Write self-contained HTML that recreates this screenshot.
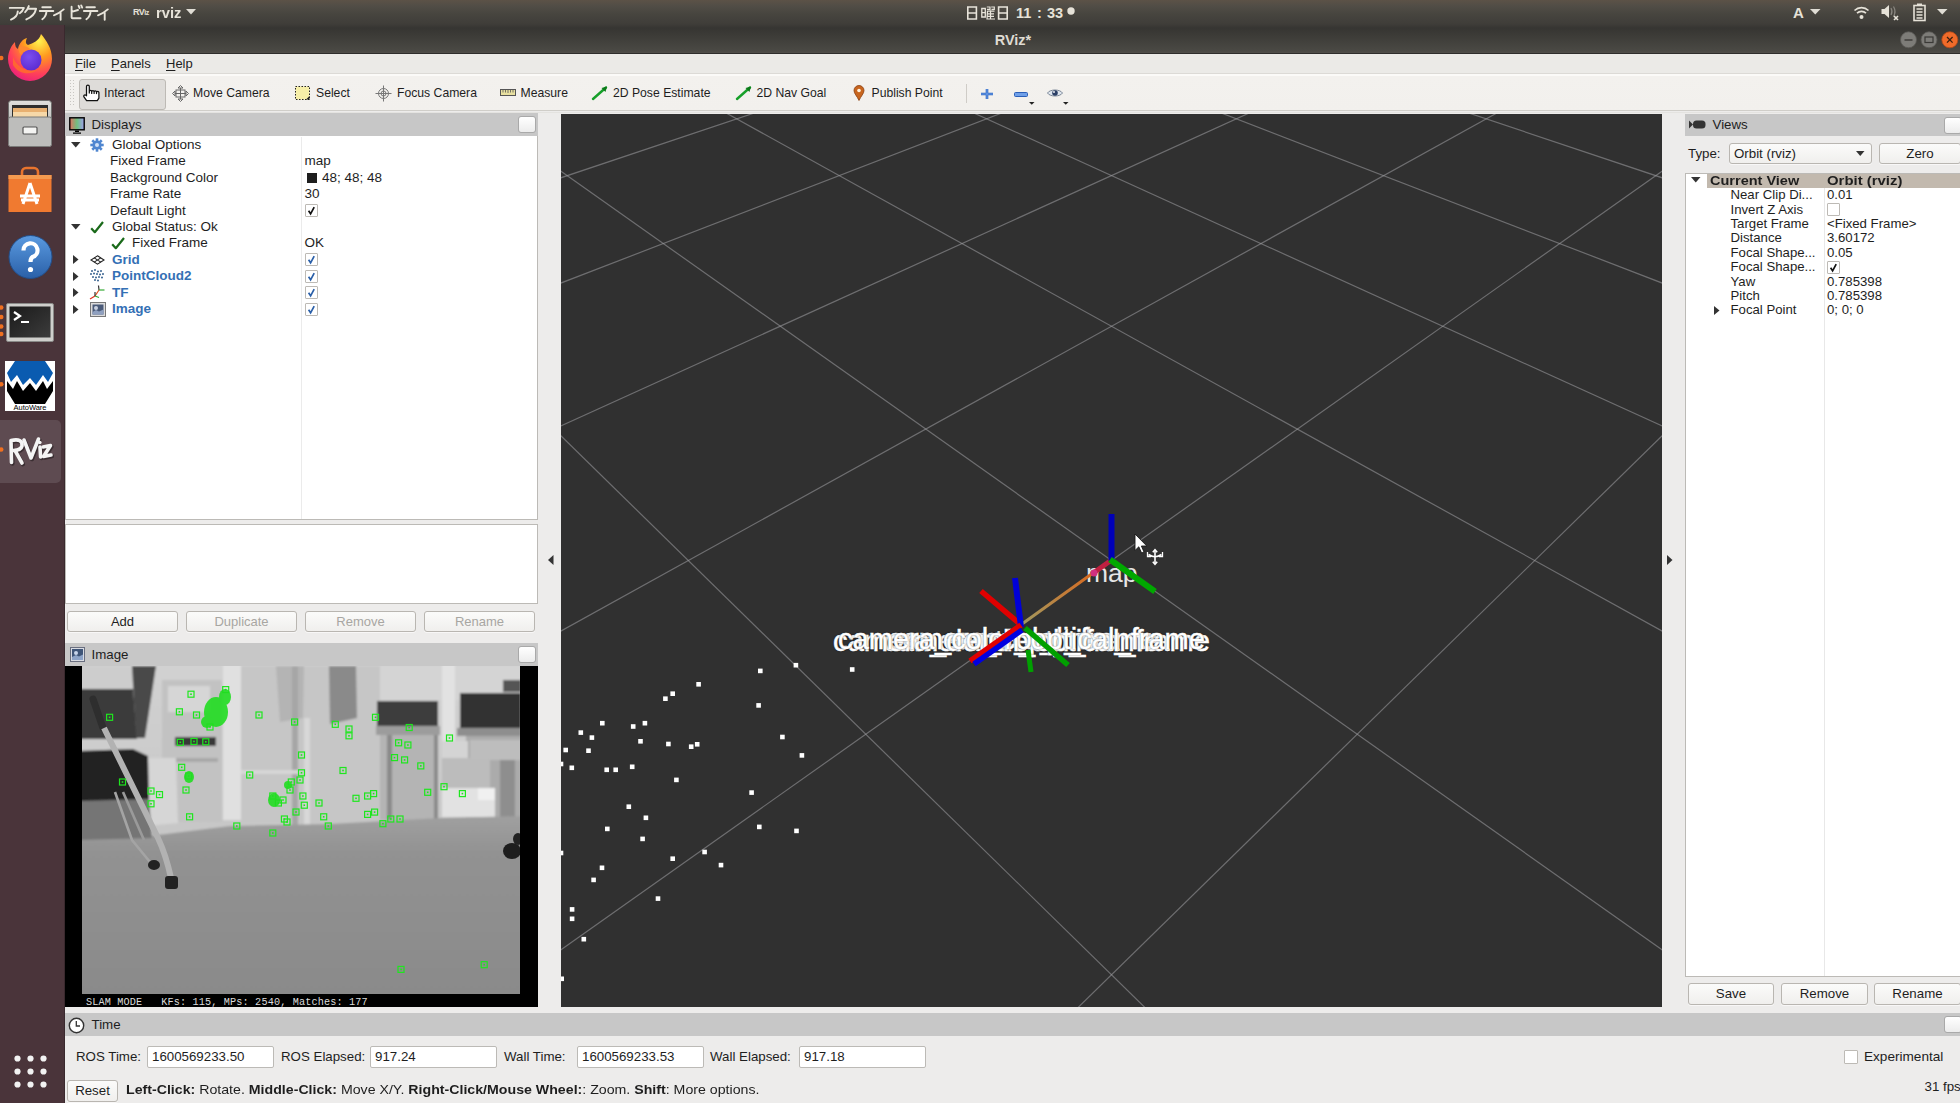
<!DOCTYPE html>
<html><head><meta charset="utf-8">
<style>
*{box-sizing:border-box}
body{margin:0;width:1960px;height:1103px;overflow:hidden;position:relative;background:#edeceb;font-family:"Liberation Sans",sans-serif;color:#1e1e1e}
.a{position:absolute}
.t{position:absolute;white-space:pre}
.btn{border:1px solid #b9b6b1;border-radius:3px;background:linear-gradient(#fbfbfa,#f0efed);text-align:center;white-space:nowrap;box-shadow:0 1px 0 rgba(255,255,255,.6)}
.hdr{background:#c7c7c7}
.fb{border:1px solid #a9a9a9;border-radius:3px;background:linear-gradient(#ffffff,#ececec)}
.cb{position:absolute;width:13px;height:13px;border:1px solid #bdbab5;background:#fff;border-radius:1px}
svg{position:absolute;overflow:visible}
</style></head><body>

<div class="a" style="left:0px;top:0px;width:1960px;height:54px;background:linear-gradient(#5c5247 0px,#514d46 6px,#47453f 14px,#3f3d39 24px,#363532 28px,#3c3b37 35px,#4a4944 51px,#4f4d48 52.5px,#2e2d2b 53.5px)"></div>
<div class="a" style="left:0px;top:25px;width:65px;height:1078px;background:#4a343a;border-right:1px solid #3a292e"></div>
<div class="a" style="left:65px;top:54px;width:1895px;height:20px;background:#ebeae7;border-bottom:1px solid #dcdad6"></div>
<div class="a" style="left:65px;top:74px;width:1895px;height:37px;background:linear-gradient(#fbfaf8 0px,#fbfaf8 1.5px,#f3f1ee 2.5px,#f2f0ed 100%);border-bottom:1px solid #d0cec9"></div>
<div class="a" style="left:65px;top:112px;width:1895px;height:1px;background:#e4e3e0"></div>
<div class="a" style="left:65px;top:113px;width:473px;height:24px;background:#c7c7c7"></div>
<svg style="left:69px;top:117px" width="16" height="17" viewBox="0 0 16 17">
<defs><linearGradient id="mon" x1="0" x2="1"><stop offset="0" stop-color="#e07060"/><stop offset="0.5" stop-color="#70c080"/><stop offset="1" stop-color="#a0a0f0"/></linearGradient></defs>
<rect x="0.8" y="0.8" width="14.4" height="12" fill="url(#mon)" stroke="#000" stroke-width="1.4"/>
<path d="M6 13.5h4v1.5h-4z M4 15.5h8v1.2h-8z" fill="#000"/></svg>
<div class="t" style="left:91.5px;top:114.50px;font-size:13.3px;line-height:20px;color:#1e1e1e;font-weight:normal;">Displays</div>
<div class="a fb" style="left:518px;top:116px;width:18px;height:17px"></div>
<div class="a" style="left:65px;top:136px;width:473px;height:384px;background:#fff;border:1px solid #bcbab6;border-top:none"></div>
<div class="a" style="left:301px;top:137px;width:1px;height:382px;background:#ebebeb"></div>
<svg style="left:70.5px;top:142.1px" width="10" height="6"><path d="M0 0h9.5l-4.75 5.5z" fill="#333"/></svg>
<svg style="left:90px;top:137.9px" width="14" height="14" viewBox="0 0 14 14"><g fill="#4f86d0">
<circle cx="7" cy="7" r="4.6"/><rect x="5.7" y="0.3" width="2.6" height="3" transform="rotate(0 7 7)"/><rect x="5.7" y="0.3" width="2.6" height="3" transform="rotate(45 7 7)"/><rect x="5.7" y="0.3" width="2.6" height="3" transform="rotate(90 7 7)"/><rect x="5.7" y="0.3" width="2.6" height="3" transform="rotate(135 7 7)"/><rect x="5.7" y="0.3" width="2.6" height="3" transform="rotate(180 7 7)"/><rect x="5.7" y="0.3" width="2.6" height="3" transform="rotate(225 7 7)"/><rect x="5.7" y="0.3" width="2.6" height="3" transform="rotate(270 7 7)"/><rect x="5.7" y="0.3" width="2.6" height="3" transform="rotate(315 7 7)"/></g><circle cx="7" cy="7" r="2" fill="#cfe0f7"/></svg>
<div class="t" style="left:112px;top:134.90px;font-size:13.5px;line-height:20px;color:#1e1e1e;font-weight:normal;">Global Options</div>
<div class="t" style="left:110px;top:151.32px;font-size:13.5px;line-height:20px;color:#1e1e1e;font-weight:normal;">Fixed Frame</div>
<div class="t" style="left:304.5px;top:151.32px;font-size:13.5px;line-height:20px;color:#1e1e1e;font-weight:normal;">map</div>
<div class="t" style="left:110px;top:167.74px;font-size:13.5px;line-height:20px;color:#1e1e1e;font-weight:normal;">Background Color</div>
<div class="a" style="left:307px;top:172.74px;width:10px;height:10px;background:#1e1e1e"></div>
<div class="t" style="left:322px;top:167.74px;font-size:13.5px;line-height:20px;color:#1e1e1e;font-weight:normal;">48; 48; 48</div>
<div class="t" style="left:110px;top:184.16px;font-size:13.5px;line-height:20px;color:#1e1e1e;font-weight:normal;">Frame Rate</div>
<div class="t" style="left:304.5px;top:184.16px;font-size:13.5px;line-height:20px;color:#1e1e1e;font-weight:normal;">30</div>
<div class="t" style="left:110px;top:200.58px;font-size:13.5px;line-height:20px;color:#1e1e1e;font-weight:normal;">Default Light</div>
<div class="cb" style="left:304.5px;top:204.08px"></div>
<svg style="left:304.5px;top:204.08px" width="13" height="13" viewBox="0 0 13 13"><path d="M3.6 6.8 L5.6 9.8 L9.2 3.2" fill="none" stroke="#111" stroke-width="1.7"/></svg>
<svg style="left:70.5px;top:224.2px" width="10" height="6"><path d="M0 0h9.5l-4.75 5.5z" fill="#333"/></svg>
<svg style="left:90px;top:221.0px" width="14" height="13" viewBox="0 0 14 13"><path d="M1.2 7.2 L4.8 11.2 L13 1" fill="none" stroke="#1a6a1a" stroke-width="2.2" stroke-linejoin="round"/></svg>
<div class="t" style="left:112px;top:217.00px;font-size:13.5px;line-height:20px;color:#1e1e1e;font-weight:normal;">Global Status: Ok</div>
<svg style="left:110.5px;top:237.42000000000002px" width="14" height="13" viewBox="0 0 14 13"><path d="M1.2 7.2 L4.8 11.2 L13 1" fill="none" stroke="#1a6a1a" stroke-width="2.2" stroke-linejoin="round"/></svg>
<div class="t" style="left:132px;top:233.42px;font-size:13.5px;line-height:20px;color:#1e1e1e;font-weight:normal;">Fixed Frame</div>
<div class="t" style="left:304.5px;top:233.42px;font-size:13.5px;line-height:20px;color:#1e1e1e;font-weight:normal;">OK</div>
<svg style="left:73px;top:255.34000000000003px" width="6" height="10"><path d="M0 0v9l5.5-4.5z" fill="#333"/></svg>
<div class="t" style="left:112px;top:249.84px;font-size:13.5px;line-height:20px;color:#3470b5;font-weight:bold;">Grid</div>
<div class="cb" style="left:304.5px;top:253.34000000000003px"></div>
<svg style="left:304.5px;top:253.34000000000003px" width="13" height="13" viewBox="0 0 13 13"><path d="M3.6 6.8 L5.6 9.8 L9.2 3.2" fill="none" stroke="#2a5fa8" stroke-width="1.7"/></svg>
<svg style="left:73px;top:271.76px" width="6" height="10"><path d="M0 0v9l5.5-4.5z" fill="#333"/></svg>
<div class="t" style="left:112px;top:266.26px;font-size:13.5px;line-height:20px;color:#3470b5;font-weight:bold;">PointCloud2</div>
<div class="cb" style="left:304.5px;top:269.76px"></div>
<svg style="left:304.5px;top:269.76px" width="13" height="13" viewBox="0 0 13 13"><path d="M3.6 6.8 L5.6 9.8 L9.2 3.2" fill="none" stroke="#2a5fa8" stroke-width="1.7"/></svg>
<svg style="left:73px;top:288.18000000000006px" width="6" height="10"><path d="M0 0v9l5.5-4.5z" fill="#333"/></svg>
<div class="t" style="left:112px;top:282.68px;font-size:13.5px;line-height:20px;color:#3470b5;font-weight:bold;">TF</div>
<div class="cb" style="left:304.5px;top:286.18000000000006px"></div>
<svg style="left:304.5px;top:286.18000000000006px" width="13" height="13" viewBox="0 0 13 13"><path d="M3.6 6.8 L5.6 9.8 L9.2 3.2" fill="none" stroke="#2a5fa8" stroke-width="1.7"/></svg>
<svg style="left:73px;top:304.6px" width="6" height="10"><path d="M0 0v9l5.5-4.5z" fill="#333"/></svg>
<div class="t" style="left:112px;top:299.10px;font-size:13.5px;line-height:20px;color:#3470b5;font-weight:bold;">Image</div>
<div class="cb" style="left:304.5px;top:302.6px"></div>
<svg style="left:304.5px;top:302.6px" width="13" height="13" viewBox="0 0 13 13"><path d="M3.6 6.8 L5.6 9.8 L9.2 3.2" fill="none" stroke="#2a5fa8" stroke-width="1.7"/></svg>
<svg style="left:90px;top:254.84000000000003px" width="15" height="10" viewBox="0 0 15 10"><g fill="none" stroke="#222" stroke-width="1.1">
<path d="M7.5 0.8 L14 5 L7.5 9.2 L1 5 Z"/><path d="M4.2 2.9 L10.8 7.1 M10.8 2.9 L4.2 7.1"/></g></svg>
<svg style="left:90px;top:269.26px" width="15" height="14"><circle cx="2" cy="2" r="0.95" fill="#2d5a8a"/><circle cx="5" cy="1" r="0.95" fill="#2d5a8a"/><circle cx="8" cy="2.5" r="0.95" fill="#2d5a8a"/><circle cx="11" cy="2" r="0.95" fill="#2d5a8a"/><circle cx="1" cy="5" r="0.95" fill="#2d5a8a"/><circle cx="4" cy="4.5" r="0.95" fill="#2d5a8a"/><circle cx="7" cy="5" r="0.95" fill="#2d5a8a"/><circle cx="10" cy="5.5" r="0.95" fill="#2d5a8a"/><circle cx="13" cy="5" r="0.95" fill="#2d5a8a"/><circle cx="3" cy="8" r="0.95" fill="#2d5a8a"/><circle cx="6" cy="8.5" r="0.95" fill="#2d5a8a"/><circle cx="9" cy="8" r="0.95" fill="#2d5a8a"/><circle cx="12" cy="8.5" r="0.95" fill="#2d5a8a"/><circle cx="5" cy="11" r="0.95" fill="#2d5a8a"/><circle cx="8" cy="11.5" r="0.95" fill="#2d5a8a"/></svg>
<svg style="left:89px;top:284.68000000000006px" width="17" height="15" viewBox="0 0 17 15"><g fill="none" stroke-width="1.2">
<path d="M9.5 0.5 L10 5" stroke="#333"/><path d="M10 5 L15.5 5" stroke="#3a3"/><path d="M10 5 L6 11" stroke="#e05020"/>
<path d="M6 11 L1 14" stroke="#e03020"/><path d="M6 11 L6 7" stroke="#333"/><path d="M6 11 L10 12.5" stroke="#3a3"/></g></svg>
<svg style="left:89.5px;top:301.6px" width="16" height="15" viewBox="0 0 16 15">
<rect x="0.5" y="0.5" width="15" height="14" fill="#dcdcdc" stroke="#777"/><rect x="2.5" y="2.5" width="11" height="10" fill="#4a5a78"/>
<circle cx="6" cy="6" r="2" fill="#c8d0e0"/><path d="M2.5 10 L6 8 L9 9.5 L13.5 7.5 V12.5 H2.5Z" fill="#8fa0c0"/></svg>
<div class="a" style="left:65px;top:524px;width:473px;height:80px;background:#fff;border:1px solid #bcbab6"></div>
<div class="a btn" style="left:67px;top:611px;width:111px;height:21px;font-size:13px;line-height:19px;color:#1e1e1e">Add</div>
<div class="a btn" style="left:186px;top:611px;width:111px;height:21px;font-size:13px;line-height:19px;color:#a8a6a2">Duplicate</div>
<div class="a btn" style="left:305px;top:611px;width:111px;height:21px;font-size:13px;line-height:19px;color:#a8a6a2">Remove</div>
<div class="a btn" style="left:424px;top:611px;width:111px;height:21px;font-size:13px;line-height:19px;color:#a8a6a2">Rename</div>
<div class="a" style="left:65px;top:643px;width:473px;height:23px;background:#c7c7c7"></div>
<svg style="left:69.5px;top:647px" width="15" height="15" viewBox="0 0 15 15">
<rect x="0.5" y="0.5" width="14" height="14" fill="#d8dbe2" stroke="#6a6f80"/><rect x="2" y="2" width="11" height="11" fill="#3f5578"/>
<circle cx="6" cy="6" r="2" fill="#c8d4ea"/><path d="M2 10 L6 8 L9 9.5 L13 7.5 V13 H2Z" fill="#8ea4c8"/></svg>
<div class="t" style="left:91.5px;top:644.50px;font-size:13.3px;line-height:20px;color:#1e1e1e;font-weight:normal;">Image</div>
<div class="a fb" style="left:518px;top:646px;width:18px;height:17px"></div>
<div class="a" style="left:65px;top:666px;width:473px;height:341px;background:#000"></div>
<svg style="left:82px;top:666px;overflow:hidden" width="438" height="328" viewBox="0 0 438 328"><defs>
<linearGradient id="wall" x1="0" y1="0" x2="0" y2="1"><stop offset="0" stop-color="#d2d2d2"/><stop offset="1" stop-color="#bcbcbc"/></linearGradient>
<linearGradient id="floor" x1="0" y1="0" x2="0" y2="1"><stop offset="0" stop-color="#a0a0a0"/><stop offset="0.2" stop-color="#929292"/><stop offset="1" stop-color="#8a8a8a"/></linearGradient>
<filter id="bl" x="-20%" y="-20%" width="140%" height="140%"><feGaussianBlur stdDeviation="1.1"/></filter>
</defs><g filter="url(#bl)"><rect x="-10" y="-10" width="460" height="350" fill="url(#wall)"/><polygon points="158.0,0.0 298.0,0.0 298.0,157.0 158.0,157.0" fill="#c6c6c6"/><polygon points="194.0,0.0 222.0,0.0 221.0,52.0 198.0,56.0" fill="#b4b4b4"/><polygon points="247.0,0.0 274.0,0.0 275.0,52.0 248.0,58.0" fill="#8a8a8a"/><polygon points="210.0,0.0 216.0,0.0 216.0,160.0 210.0,160.0" fill="#a6a6a6"/><polygon points="222.0,52.0 228.0,52.0 228.0,160.0 222.0,160.0" fill="#d8d8d8"/><polygon points="159.0,104.0 218.0,104.0 218.0,108.0 159.0,108.0" fill="#d6d6d6"/><polygon points="298.0,0.0 439.0,0.0 439.0,34.0 298.0,34.0" fill="#d4d4d4"/><polygon points="80.0,14.0 140.0,14.0 140.0,156.0 80.0,156.0" fill="#c2c2c2"/><polygon points="86.0,20.0 128.0,20.0 128.0,46.0 86.0,46.0" fill="#d6d6d6"/><polygon points="93.0,71.0 134.0,71.0 134.0,80.0 93.0,80.0" fill="#383838"/><polygon points="84.0,92.0 136.0,92.0 136.0,96.0 84.0,96.0" fill="#a8a8a8"/><polygon points="141.0,-2.0 159.0,-2.0 159.0,154.0 141.0,154.0" fill="#e0e0e0"/><polygon points="360.0,-2.0 373.0,-2.0 373.0,76.0 360.0,76.0" fill="#e2e2e2"/><polygon points="61.0,92.0 94.0,92.0 96.0,157.0 64.0,160.0" fill="#d6d6d6"/><polygon points="295.0,35.0 356.0,35.0 356.0,60.0 295.0,60.0" fill="#3c3c3c"/><polygon points="294.0,60.0 358.0,60.0 358.0,69.0 294.0,69.0" fill="#9c9c9c"/><polygon points="298.0,69.0 356.0,69.0 356.0,154.0 298.0,154.0" fill="#b4b4b4"/><polygon points="305.0,69.0 310.0,69.0 310.0,154.0 305.0,154.0" fill="#8a8a8a"/><polygon points="352.0,69.0 356.0,69.0 356.0,154.0 352.0,154.0" fill="#8a8a8a"/><polygon points="421.0,14.0 439.0,14.0 439.0,26.0 421.0,26.0" fill="#555555"/><polygon points="378.0,27.0 439.0,27.0 439.0,62.0 378.0,62.0" fill="#303030"/><polygon points="375.0,62.0 439.0,62.0 439.0,70.0 375.0,70.0" fill="#8e8e8e"/><polygon points="384.0,70.0 439.0,70.0 439.0,154.0 384.0,154.0" fill="#ababab"/><polygon points="388.0,74.0 439.0,74.0 439.0,94.0 388.0,94.0" fill="#bdbdbd"/><polygon points="418.0,94.0 433.0,94.0 433.0,154.0 418.0,154.0" fill="#8e8e8e"/><polygon points="360.0,75.0 386.0,75.0 386.0,92.0 360.0,92.0" fill="#d4d4d4"/><polygon points="360.0,92.0 408.0,92.0 408.0,122.0 360.0,122.0" fill="#bcbcbc"/><polygon points="360.0,122.0 413.0,122.0 413.0,151.0 360.0,151.0" fill="#e2e2e2"/><polygon points="396.0,122.0 413.0,122.0 413.0,134.0 396.0,134.0" fill="#f0f0f0"/><polygon points="-12.0,172.0 68.0,170.0 148.0,160.0 248.0,158.0 358.0,152.0 448.0,150.0 448.0,334.0 -12.0,334.0" fill="url(#floor)"/><polygon points="-6.0,0.0 55.0,0.0 55.0,86.0 -6.0,86.0" fill="#cdcdcd"/><polygon points="-6.0,23.0 51.0,23.0 55.0,73.0 -6.0,73.0" fill="#3a3a3a"/><polygon points="50.0,0.0 74.0,0.0 63.0,72.0 54.0,72.0" fill="#4a4a4a"/><polygon points="-6.0,85.0 51.0,83.0 66.0,90.0 67.0,134.0 -6.0,136.0" fill="#242424"/><polygon points="-6.0,135.0 67.0,133.0 70.0,172.0 -6.0,174.0" fill="#747474"/></g><path d="M11 33 L21 62" stroke="#2e2e2e" stroke-width="7" stroke-linecap="round"/><path d="M22 62 L76 172 Q84 189 89 212" fill="none" stroke="#b2b2b2" stroke-width="6"/><path d="M33 126 L50 174 L68 196" fill="none" stroke="#a4a4a4" stroke-width="2.6"/><path d="M41 126 L62 174" fill="none" stroke="#9a9a9a" stroke-width="2.6"/><ellipse cx="72" cy="199" rx="6" ry="5" fill="#222"/><rect x="83" y="210" width="13" height="13" rx="3" fill="#222"/><ellipse cx="430" cy="185" rx="9" ry="8" fill="#1e1e1e"/><ellipse cx="436" cy="173" rx="5" ry="6" fill="#222"/><g fill="none" stroke="#1ee61e" stroke-width="1.2"><rect x="24.6" y="48.3" width="6" height="6"/><rect x="26.8" y="50.5" width="1.6" height="1.6" fill="#1ee61e" stroke="none"/><rect x="37.5" y="113.0" width="6" height="6"/><rect x="39.7" y="115.2" width="1.6" height="1.6" fill="#1ee61e" stroke="none"/><rect x="66.0" y="122.0" width="6" height="6"/><rect x="68.2" y="124.2" width="1.6" height="1.6" fill="#1ee61e" stroke="none"/><rect x="74.5" y="125.6" width="6" height="6"/><rect x="76.7" y="127.8" width="1.6" height="1.6" fill="#1ee61e" stroke="none"/><rect x="66.0" y="134.8" width="6" height="6"/><rect x="68.2" y="137.0" width="1.6" height="1.6" fill="#1ee61e" stroke="none"/><rect x="104.6" y="147.8" width="6" height="6"/><rect x="106.8" y="150.0" width="1.6" height="1.6" fill="#1ee61e" stroke="none"/><rect x="96.7" y="98.3" width="6" height="6"/><rect x="98.9" y="100.5" width="1.6" height="1.6" fill="#1ee61e" stroke="none"/><rect x="103.7" y="107.0" width="6" height="6"/><rect x="105.9" y="109.2" width="1.6" height="1.6" fill="#1ee61e" stroke="none"/><rect x="95.3" y="73.3" width="6" height="6"/><rect x="97.5" y="75.5" width="1.6" height="1.6" fill="#1ee61e" stroke="none"/><rect x="109.0" y="72.4" width="6" height="6"/><rect x="111.2" y="74.6" width="1.6" height="1.6" fill="#1ee61e" stroke="none"/><rect x="120.8" y="72.8" width="6" height="6"/><rect x="123.0" y="75.0" width="1.6" height="1.6" fill="#1ee61e" stroke="none"/><rect x="106.0" y="25.2" width="6" height="6"/><rect x="108.2" y="27.4" width="1.6" height="1.6" fill="#1ee61e" stroke="none"/><rect x="94.4" y="42.8" width="6" height="6"/><rect x="96.6" y="45.0" width="1.6" height="1.6" fill="#1ee61e" stroke="none"/><rect x="111.5" y="46.0" width="6" height="6"/><rect x="113.7" y="48.2" width="1.6" height="1.6" fill="#1ee61e" stroke="none"/><rect x="140.7" y="20.6" width="6" height="6"/><rect x="142.9" y="22.8" width="1.6" height="1.6" fill="#1ee61e" stroke="none"/><rect x="164.7" y="106.0" width="6" height="6"/><rect x="166.9" y="108.2" width="1.6" height="1.6" fill="#1ee61e" stroke="none"/><rect x="174.0" y="46.0" width="6" height="6"/><rect x="176.2" y="48.2" width="1.6" height="1.6" fill="#1ee61e" stroke="none"/><rect x="151.8" y="157.0" width="6" height="6"/><rect x="154.0" y="159.2" width="1.6" height="1.6" fill="#1ee61e" stroke="none"/><rect x="187.8" y="127.0" width="6" height="6"/><rect x="190.0" y="129.2" width="1.6" height="1.6" fill="#1ee61e" stroke="none"/><rect x="193.4" y="134.0" width="6" height="6"/><rect x="195.6" y="136.2" width="1.6" height="1.6" fill="#1ee61e" stroke="none"/><rect x="187.8" y="164.0" width="6" height="6"/><rect x="190.0" y="166.2" width="1.6" height="1.6" fill="#1ee61e" stroke="none"/><rect x="199.4" y="150.0" width="6" height="6"/><rect x="201.6" y="152.2" width="1.6" height="1.6" fill="#1ee61e" stroke="none"/><rect x="206.3" y="113.0" width="6" height="6"/><rect x="208.5" y="115.2" width="1.6" height="1.6" fill="#1ee61e" stroke="none"/><rect x="209.6" y="53.0" width="6" height="6"/><rect x="211.8" y="55.2" width="1.6" height="1.6" fill="#1ee61e" stroke="none"/><rect x="216.5" y="86.0" width="6" height="6"/><rect x="218.7" y="88.2" width="1.6" height="1.6" fill="#1ee61e" stroke="none"/><rect x="216.5" y="103.8" width="6" height="6"/><rect x="218.7" y="106.0" width="1.6" height="1.6" fill="#1ee61e" stroke="none"/><rect x="217.9" y="127.0" width="6" height="6"/><rect x="220.1" y="129.2" width="1.6" height="1.6" fill="#1ee61e" stroke="none"/><rect x="219.3" y="136.2" width="6" height="6"/><rect x="221.5" y="138.4" width="1.6" height="1.6" fill="#1ee61e" stroke="none"/><rect x="234.0" y="134.0" width="6" height="6"/><rect x="236.2" y="136.2" width="1.6" height="1.6" fill="#1ee61e" stroke="none"/><rect x="243.3" y="157.0" width="6" height="6"/><rect x="245.5" y="159.2" width="1.6" height="1.6" fill="#1ee61e" stroke="none"/><rect x="238.7" y="147.8" width="6" height="6"/><rect x="240.9" y="150.0" width="1.6" height="1.6" fill="#1ee61e" stroke="none"/><rect x="264.0" y="60.0" width="6" height="6"/><rect x="266.2" y="62.2" width="1.6" height="1.6" fill="#1ee61e" stroke="none"/><rect x="264.0" y="66.8" width="6" height="6"/><rect x="266.2" y="69.0" width="1.6" height="1.6" fill="#1ee61e" stroke="none"/><rect x="250.3" y="55.3" width="6" height="6"/><rect x="252.5" y="57.5" width="1.6" height="1.6" fill="#1ee61e" stroke="none"/><rect x="258.0" y="101.5" width="6" height="6"/><rect x="260.2" y="103.7" width="1.6" height="1.6" fill="#1ee61e" stroke="none"/><rect x="271.0" y="129.3" width="6" height="6"/><rect x="273.2" y="131.5" width="1.6" height="1.6" fill="#1ee61e" stroke="none"/><rect x="282.6" y="127.0" width="6" height="6"/><rect x="284.8" y="129.2" width="1.6" height="1.6" fill="#1ee61e" stroke="none"/><rect x="288.6" y="124.6" width="6" height="6"/><rect x="290.8" y="126.8" width="1.6" height="1.6" fill="#1ee61e" stroke="none"/><rect x="282.6" y="145.4" width="6" height="6"/><rect x="284.8" y="147.6" width="1.6" height="1.6" fill="#1ee61e" stroke="none"/><rect x="289.6" y="143.1" width="6" height="6"/><rect x="291.8" y="145.3" width="1.6" height="1.6" fill="#1ee61e" stroke="none"/><rect x="297.9" y="154.7" width="6" height="6"/><rect x="300.1" y="156.9" width="1.6" height="1.6" fill="#1ee61e" stroke="none"/><rect x="305.8" y="150.0" width="6" height="6"/><rect x="308.0" y="152.2" width="1.6" height="1.6" fill="#1ee61e" stroke="none"/><rect x="315.0" y="150.0" width="6" height="6"/><rect x="317.2" y="152.2" width="1.6" height="1.6" fill="#1ee61e" stroke="none"/><rect x="324.2" y="58.5" width="6" height="6"/><rect x="326.4" y="60.7" width="1.6" height="1.6" fill="#1ee61e" stroke="none"/><rect x="313.6" y="73.8" width="6" height="6"/><rect x="315.8" y="76.0" width="1.6" height="1.6" fill="#1ee61e" stroke="none"/><rect x="322.9" y="76.0" width="6" height="6"/><rect x="325.1" y="78.2" width="1.6" height="1.6" fill="#1ee61e" stroke="none"/><rect x="309.5" y="88.6" width="6" height="6"/><rect x="311.7" y="90.8" width="1.6" height="1.6" fill="#1ee61e" stroke="none"/><rect x="319.6" y="90.9" width="6" height="6"/><rect x="321.8" y="93.1" width="1.6" height="1.6" fill="#1ee61e" stroke="none"/><rect x="335.8" y="96.9" width="6" height="6"/><rect x="338.0" y="99.1" width="1.6" height="1.6" fill="#1ee61e" stroke="none"/><rect x="342.7" y="123.3" width="6" height="6"/><rect x="344.9" y="125.5" width="1.6" height="1.6" fill="#1ee61e" stroke="none"/><rect x="359.0" y="117.7" width="6" height="6"/><rect x="361.2" y="119.9" width="1.6" height="1.6" fill="#1ee61e" stroke="none"/><rect x="364.5" y="69.0" width="6" height="6"/><rect x="366.7" y="71.2" width="1.6" height="1.6" fill="#1ee61e" stroke="none"/><rect x="377.4" y="124.6" width="6" height="6"/><rect x="379.6" y="126.8" width="1.6" height="1.6" fill="#1ee61e" stroke="none"/><rect x="316.0" y="300.4" width="6" height="6"/><rect x="318.2" y="302.6" width="1.6" height="1.6" fill="#1ee61e" stroke="none"/><rect x="399.2" y="295.7" width="6" height="6"/><rect x="401.4" y="297.9" width="1.6" height="1.6" fill="#1ee61e" stroke="none"/><rect x="290.5" y="48.3" width="6" height="6"/><rect x="292.7" y="50.5" width="1.6" height="1.6" fill="#1ee61e" stroke="none"/><rect x="205.0" y="121.0" width="6" height="6"/><rect x="207.2" y="123.2" width="1.6" height="1.6" fill="#1ee61e" stroke="none"/><rect x="211.0" y="143.0" width="6" height="6"/><rect x="213.2" y="145.2" width="1.6" height="1.6" fill="#1ee61e" stroke="none"/><rect x="101.0" y="121.0" width="6" height="6"/><rect x="103.2" y="123.2" width="1.6" height="1.6" fill="#1ee61e" stroke="none"/><rect x="125.0" y="58.0" width="6" height="6"/><rect x="127.2" y="60.2" width="1.6" height="1.6" fill="#1ee61e" stroke="none"/><rect x="198.0" y="131.0" width="6" height="6"/><rect x="200.2" y="133.2" width="1.6" height="1.6" fill="#1ee61e" stroke="none"/><rect x="202.0" y="153.0" width="6" height="6"/><rect x="204.2" y="155.2" width="1.6" height="1.6" fill="#1ee61e" stroke="none"/><rect x="215.0" y="111.0" width="6" height="6"/><rect x="217.2" y="113.2" width="1.6" height="1.6" fill="#1ee61e" stroke="none"/></g><g fill="#22dd22" opacity="0.9"><ellipse cx="134" cy="46" rx="12" ry="15"/><ellipse cx="143" cy="31" rx="6" ry="8"/><ellipse cx="125" cy="56" rx="6" ry="6"/><ellipse cx="107" cy="111" rx="5" ry="6"/><ellipse cx="192" cy="134" rx="6" ry="7"/><ellipse cx="206" cy="119" rx="4" ry="4"/></g></svg>
<div class="t" style="left:86px;top:997px;font-family:'Liberation Mono',monospace;font-size:10.2px;line-height:12px;color:#dcdcdc;letter-spacing:0.15px;font-weight:normal">SLAM MODE   KFs: 115, MPs: 2540, Matches: 177</div>
<div class="a" style="left:561px;top:114px;width:1101px;height:893px;background:#303030;overflow:hidden">
<svg width="1101" height="893" style="left:0;top:0" stroke="#a0a0a4" stroke-opacity="0.55" stroke-width="1.2"><line x1="550.5" y1="-180.1" x2="2666.8" y2="446.5"/>
<line x1="550.5" y1="-180.1" x2="-1565.8" y2="446.5"/>
<line x1="456.4" y1="-152.2" x2="2762.2" y2="620.3"/>
<line x1="644.6" y1="-152.2" x2="-1661.2" y2="620.3"/>
<line x1="350.0" y1="-120.7" x2="2894.3" y2="860.8"/>
<line x1="751.0" y1="-120.7" x2="-1793.3" y2="860.8"/>
<line x1="228.5" y1="-84.8" x2="3089.2" y2="1215.8"/>
<line x1="872.5" y1="-84.8" x2="-1988.2" y2="1215.8"/>
<line x1="88.7" y1="-43.3" x2="3405.8" y2="1792.5"/>
<line x1="1012.3" y1="-43.3" x2="-2304.8" y2="1792.5"/>
<line x1="-74.1" y1="4.8" x2="4009.7" y2="2892.6"/>
<line x1="1175.1" y1="4.8" x2="-2908.7" y2="2892.6"/>
<line x1="-265.9" y1="61.6" x2="5617.5" y2="5820.8"/>
<line x1="1366.9" y1="61.6" x2="-4516.5" y2="5820.8"/>
<line x1="-495.3" y1="129.6" x2="23030.6" y2="37536.8"/>
<line x1="1596.3" y1="129.6" x2="-21929.7" y2="37537.0"/>
<line x1="-774.6" y1="212.3" x2="17371.9" y2="77017.7"/>
<line x1="1875.6" y1="212.3" x2="-16270.8" y2="77017.7"/>
<line x1="-1122.0" y1="315.1" x2="-13117.1" y2="77017.7"/>
<line x1="2223.0" y1="315.1" x2="14218.1" y2="77017.7"/>
<line x1="-1565.8" y1="446.5" x2="-43606.0" y2="77017.7"/>
<line x1="2666.8" y1="446.5" x2="44707.0" y2="77017.7"/></svg>
<svg width="1101" height="893" style="left:0;top:0"><rect x="197.0" y="554.6" width="4.6" height="4.6" fill="#fff"/><rect x="232.6" y="548.9" width="4.6" height="4.6" fill="#fff"/><rect x="288.9" y="553.2" width="4.6" height="4.6" fill="#fff"/><rect x="135.3" y="568.0" width="4.6" height="4.6" fill="#fff"/><rect x="109.4" y="577.4" width="4.6" height="4.6" fill="#fff"/><rect x="102.1" y="582.4" width="4.6" height="4.6" fill="#fff"/><rect x="195.3" y="589.1" width="4.6" height="4.6" fill="#fff"/><rect x="39.0" y="606.9" width="4.6" height="4.6" fill="#fff"/><rect x="69.9" y="610.2" width="4.6" height="4.6" fill="#fff"/><rect x="81.6" y="606.9" width="4.6" height="4.6" fill="#fff"/><rect x="17.5" y="616.3" width="4.6" height="4.6" fill="#fff"/><rect x="28.6" y="621.3" width="4.6" height="4.6" fill="#fff"/><rect x="77.2" y="625.0" width="4.6" height="4.6" fill="#fff"/><rect x="105.1" y="627.7" width="4.6" height="4.6" fill="#fff"/><rect x="127.9" y="630.4" width="4.6" height="4.6" fill="#fff"/><rect x="133.9" y="628.0" width="4.6" height="4.6" fill="#fff"/><rect x="219.1" y="620.7" width="4.6" height="4.6" fill="#fff"/><rect x="238.6" y="639.1" width="4.6" height="4.6" fill="#fff"/><rect x="2.4" y="633.7" width="4.6" height="4.6" fill="#fff"/><rect x="25.2" y="634.4" width="4.6" height="4.6" fill="#fff"/><rect x="-2.3" y="647.7" width="4.6" height="4.6" fill="#fff"/><rect x="8.5" y="651.5" width="4.6" height="4.6" fill="#fff"/><rect x="43.4" y="653.5" width="4.6" height="4.6" fill="#fff"/><rect x="52.4" y="653.5" width="4.6" height="4.6" fill="#fff"/><rect x="68.9" y="650.5" width="4.6" height="4.6" fill="#fff"/><rect x="113.1" y="663.6" width="4.6" height="4.6" fill="#fff"/><rect x="188.3" y="676.3" width="4.6" height="4.6" fill="#fff"/><rect x="65.5" y="690.4" width="4.6" height="4.6" fill="#fff"/><rect x="82.6" y="701.5" width="4.6" height="4.6" fill="#fff"/><rect x="44.0" y="712.6" width="4.6" height="4.6" fill="#fff"/><rect x="79.3" y="722.6" width="4.6" height="4.6" fill="#fff"/><rect x="196.0" y="710.6" width="4.6" height="4.6" fill="#fff"/><rect x="233.2" y="714.6" width="4.6" height="4.6" fill="#fff"/><rect x="-2.3" y="736.7" width="4.6" height="4.6" fill="#fff"/><rect x="141.3" y="735.7" width="4.6" height="4.6" fill="#fff"/><rect x="109.4" y="742.4" width="4.6" height="4.6" fill="#fff"/><rect x="157.7" y="748.8" width="4.6" height="4.6" fill="#fff"/><rect x="38.7" y="751.5" width="4.6" height="4.6" fill="#fff"/><rect x="30.3" y="763.6" width="4.6" height="4.6" fill="#fff"/><rect x="94.7" y="782.3" width="4.6" height="4.6" fill="#fff"/><rect x="8.8" y="793.1" width="4.6" height="4.6" fill="#fff"/><rect x="8.8" y="802.5" width="4.6" height="4.6" fill="#fff"/><rect x="20.5" y="822.9" width="4.6" height="4.6" fill="#fff"/><rect x="-1.6" y="862.5" width="4.6" height="4.6" fill="#fff"/></svg>
<div class="t" style="left:510.79999999999995px;top:443.5px;width:80px;text-align:center;font-size:26.5px;line-height:30px;color:#e6e6e6">map</div>
<div class="t" style="left:160.5px;top:507.5px;width:600px;text-align:center;font-size:29.1px;line-height:34px;color:#fff;-webkit-text-stroke:0.5px #fff;text-shadow:0 0 1.5px #111">camera_link</div>
<div class="t" style="left:160.5px;top:509.5px;width:600px;text-align:center;font-size:29.1px;line-height:34px;color:#fff;-webkit-text-stroke:0.5px #fff;text-shadow:0 0 1.5px #111">camera_depth_frame</div>
<div class="t" style="left:160.5px;top:507.5px;width:600px;text-align:center;font-size:29.1px;line-height:34px;color:#fff;-webkit-text-stroke:0.5px #fff;text-shadow:0 0 1.5px #111">camera_color_frame</div>
<div class="t" style="left:160.5px;top:509.5px;width:600px;text-align:center;font-size:29.1px;line-height:34px;color:#fff;-webkit-text-stroke:0.5px #fff;text-shadow:0 0 1.5px #111">camera_depth_optical_frame</div>
<div class="t" style="left:160.5px;top:507.5px;width:600px;text-align:center;font-size:29.1px;line-height:34px;color:#fff;-webkit-text-stroke:0.5px #fff;text-shadow:0 0 1.5px #111">camera_color_optical_frame</div>
<svg width="1101" height="893" style="left:0;top:0"><defs><linearGradient id="cl" gradientUnits="userSpaceOnUse" x1="531" y1="460" x2="460" y2="511"><stop offset="0" stop-color="#d86a20"/><stop offset="1" stop-color="#a09a60"/></linearGradient></defs><line x1="532" y1="459" x2="461" y2="510" stroke="url(#cl)" stroke-width="3"/><line x1="550.5" y1="446.0" x2="531.0" y2="460.0" stroke="#c02040" stroke-width="5" stroke-linecap="butt"/><circle cx="533" cy="459" r="3.5" fill="#d03080"/><line x1="550.5" y1="447.0" x2="550.5" y2="400.0" stroke="#0000b8" stroke-width="6" stroke-linecap="butt"/><line x1="549.0" y1="445.5" x2="594.0" y2="477.5" stroke="#00a800" stroke-width="6" stroke-linecap="butt"/></svg>
<svg width="1101" height="893" style="left:0;top:0"><line x1="460.0" y1="511.0" x2="420.0" y2="477.0" stroke="#e00000" stroke-width="5.5" stroke-linecap="butt"/><line x1="460.0" y1="513.0" x2="454.0" y2="464.0" stroke="#0000d8" stroke-width="6" stroke-linecap="butt"/><line x1="460.0" y1="511.0" x2="409.0" y2="547.0" stroke="#e00000" stroke-width="5.5" stroke-linecap="butt"/><line x1="461.0" y1="516.0" x2="413.0" y2="550.0" stroke="#0000e0" stroke-width="5.5" stroke-linecap="butt"/><line x1="464.0" y1="514.0" x2="507.0" y2="551.0" stroke="#00a000" stroke-width="5.5" stroke-linecap="butt"/><line x1="467.0" y1="536.0" x2="470.0" y2="558.0" stroke="#00a000" stroke-width="5" stroke-linecap="butt"/></svg>
<svg style="left:573px;top:419px" width="34" height="36" viewBox="0 0 34 36">
<path d="M1 1 L1 17.5 L4.8 13.8 L7.6 20 L10 19 L7.4 13 L12.8 13 Z" fill="#fff" stroke="#1a1a1a" stroke-width="0.9"/>
<g stroke="#fff" stroke-width="1.6" fill="none"><path d="M21 17 V31"/><path d="M14.5 21.5 Q21 26 27.5 21.5"/><path d="M18.8 19.2 L21 16.8 L23.2 19.2 M18.8 28.8 L21 31.2 L23.2 28.8"/><path d="M13.5 19 V23.5 H17 M28.5 19 V23.5 H25" stroke-width="1.3"/></g></svg>
</div>
<svg style="left:548px;top:555px" width="6" height="10"><path d="M5.5 0 V10 L0 5Z" fill="#333"/></svg>
<svg style="left:1667px;top:555px" width="6" height="10"><path d="M0 0 V10 L5.5 5Z" fill="#333"/></svg>
<div class="a" style="left:1685px;top:114px;width:275px;height:22px;background:#c7c7c7"></div>
<svg style="left:1689px;top:119px" width="17" height="11" viewBox="0 0 17 11"><path d="M0 1.5 L4 5.5 L0 9.5Z" fill="#333"/><rect x="4" y="1.5" width="12.5" height="8" rx="3.5" fill="#333"/></svg>
<div class="t" style="left:1712.5px;top:114.50px;font-size:13.3px;line-height:20px;color:#1e1e1e;font-weight:normal;">Views</div>
<div class="a fb" style="left:1944px;top:117px;width:18px;height:17px"></div>
<div class="t" style="left:1688px;top:143.50px;font-size:13.3px;line-height:20px;color:#1e1e1e;font-weight:normal;">Type:</div>
<div class="a btn" style="left:1729px;top:143px;width:143px;height:21px;text-align:left;padding-left:4px;font-size:13.3px;line-height:19px">Orbit (rviz)</div>
<svg style="left:1856px;top:151px" width="9" height="6"><path d="M0 0h8.5l-4.25 5z" fill="#333"/></svg>
<div class="a btn" style="left:1879px;top:143px;width:82px;height:21px;font-size:13.3px;line-height:19px;color:#1e1e1e">Zero</div>
<div class="a" style="left:1685px;top:173px;width:280px;height:804px;background:#fff;border:1px solid #bcbab6"></div>
<div class="a" style="left:1824px;top:174px;width:1px;height:802px;background:#e8e8e8"></div>
<div class="a" style="left:1707px;top:174px;width:253px;height:14px;background:#c2b9ae"></div>
<svg style="left:1691px;top:177px" width="10" height="6"><path d="M0 0h9.5l-4.75 5.5z" fill="#333"/></svg>
<div class="t" style="left:1710px;top:173.80px;font-size:13.2px;line-height:14px;color:#1e1e1e;font-weight:bold;transform:scaleX(1.10);transform-origin:0 0">Current View</div>
<div class="t" style="left:1827px;top:173.80px;font-size:13.2px;line-height:14px;color:#1e1e1e;font-weight:bold;transform:scaleX(1.13);transform-origin:0 0">Orbit (rviz)</div>
<div class="t" style="left:1730.5px;top:188.20px;font-size:13.2px;line-height:14px;color:#1e1e1e;font-weight:normal;">Near Clip Di...</div>
<div class="t" style="left:1827px;top:188.20px;font-size:13.2px;line-height:14px;color:#1e1e1e;font-weight:normal;">0.01</div>
<div class="t" style="left:1730.5px;top:202.60px;font-size:13.2px;line-height:14px;color:#1e1e1e;font-weight:normal;">Invert Z Axis</div>
<div class="cb" style="left:1827px;top:203.1px"></div>
<div class="t" style="left:1730.5px;top:217.00px;font-size:13.2px;line-height:14px;color:#1e1e1e;font-weight:normal;">Target Frame</div>
<div class="t" style="left:1827px;top:217.00px;font-size:13.2px;line-height:14px;color:#1e1e1e;font-weight:normal;">&lt;Fixed Frame&gt;</div>
<div class="t" style="left:1730.5px;top:231.40px;font-size:13.2px;line-height:14px;color:#1e1e1e;font-weight:normal;">Distance</div>
<div class="t" style="left:1827px;top:231.40px;font-size:13.2px;line-height:14px;color:#1e1e1e;font-weight:normal;">3.60172</div>
<div class="t" style="left:1730.5px;top:245.80px;font-size:13.2px;line-height:14px;color:#1e1e1e;font-weight:normal;">Focal Shape...</div>
<div class="t" style="left:1827px;top:245.80px;font-size:13.2px;line-height:14px;color:#1e1e1e;font-weight:normal;">0.05</div>
<div class="t" style="left:1730.5px;top:260.20px;font-size:13.2px;line-height:14px;color:#1e1e1e;font-weight:normal;">Focal Shape...</div>
<div class="cb" style="left:1827px;top:260.7px"></div>
<svg style="left:1827px;top:260.7px" width="13" height="13" viewBox="0 0 13 13"><path d="M3.6 6.8 L5.6 9.8 L9.2 3.2" fill="none" stroke="#111" stroke-width="1.7"/></svg>
<div class="t" style="left:1730.5px;top:274.60px;font-size:13.2px;line-height:14px;color:#1e1e1e;font-weight:normal;">Yaw</div>
<div class="t" style="left:1827px;top:274.60px;font-size:13.2px;line-height:14px;color:#1e1e1e;font-weight:normal;">0.785398</div>
<div class="t" style="left:1730.5px;top:289.00px;font-size:13.2px;line-height:14px;color:#1e1e1e;font-weight:normal;">Pitch</div>
<div class="t" style="left:1827px;top:289.00px;font-size:13.2px;line-height:14px;color:#1e1e1e;font-weight:normal;">0.785398</div>
<div class="t" style="left:1730.5px;top:303.40px;font-size:13.2px;line-height:14px;color:#1e1e1e;font-weight:normal;">Focal Point</div>
<div class="t" style="left:1827px;top:303.40px;font-size:13.2px;line-height:14px;color:#1e1e1e;font-weight:normal;">0; 0; 0</div>
<svg style="left:1714px;top:305.9px" width="6" height="10"><path d="M0 0v9l5.5-4.5z" fill="#333"/></svg>
<div class="a btn" style="left:1688px;top:983px;width:86px;height:22px;font-size:13.3px;line-height:20px;color:#1e1e1e">Save</div>
<div class="a btn" style="left:1781px;top:983px;width:87px;height:22px;font-size:13.3px;line-height:20px;color:#1e1e1e">Remove</div>
<div class="a btn" style="left:1874px;top:983px;width:87px;height:22px;font-size:13.3px;line-height:20px;color:#1e1e1e">Rename</div>
<div class="a" style="left:65px;top:1013px;width:1895px;height:23px;background:#c7c7c7"></div>
<svg style="left:68px;top:1017px" width="17" height="17" viewBox="0 0 17 17"><circle cx="8.5" cy="8.5" r="7.2" fill="#fff" stroke="#333" stroke-width="1.4"/><path d="M8.3 4 V9 H12" fill="none" stroke="#333" stroke-width="1.3"/></svg>
<div class="t" style="left:91.5px;top:1015.00px;font-size:13.3px;line-height:20px;color:#1e1e1e;font-weight:normal;">Time</div>
<div class="a fb" style="left:1944px;top:1016px;width:18px;height:17px"></div>
<div class="t" style="left:76px;top:1047.00px;font-size:13.3px;line-height:20px;color:#1e1e1e;font-weight:normal;">ROS Time:</div>
<div class="a" style="left:147px;top:1046px;width:127px;height:22px;background:#fff;border:1px solid #bcbab6;border-radius:2px;padding-left:4px;font-size:13.3px;line-height:20px;white-space:nowrap">1600569233.50</div>
<div class="t" style="left:281px;top:1047.00px;font-size:13.3px;line-height:20px;color:#1e1e1e;font-weight:normal;">ROS Elapsed:</div>
<div class="a" style="left:370px;top:1046px;width:127px;height:22px;background:#fff;border:1px solid #bcbab6;border-radius:2px;padding-left:4px;font-size:13.3px;line-height:20px;white-space:nowrap">917.24</div>
<div class="t" style="left:504px;top:1047.00px;font-size:13.3px;line-height:20px;color:#1e1e1e;font-weight:normal;">Wall Time:</div>
<div class="a" style="left:577px;top:1046px;width:127px;height:22px;background:#fff;border:1px solid #bcbab6;border-radius:2px;padding-left:4px;font-size:13.3px;line-height:20px;white-space:nowrap">1600569233.53</div>
<div class="t" style="left:710px;top:1047.00px;font-size:13.3px;line-height:20px;color:#1e1e1e;font-weight:normal;">Wall Elapsed:</div>
<div class="a" style="left:799px;top:1046px;width:127px;height:22px;background:#fff;border:1px solid #bcbab6;border-radius:2px;padding-left:4px;font-size:13.3px;line-height:20px;white-space:nowrap">917.18</div>
<div class="cb" style="left:1844px;top:1050px;width:14px;height:14px"></div>
<div class="t" style="left:1864px;top:1047.00px;font-size:13.6px;line-height:20px;color:#1e1e1e;font-weight:normal;">Experimental</div>
<div class="a btn" style="left:67px;top:1080px;width:51px;height:22px;font-size:13.3px;line-height:20px;color:#1e1e1e">Reset</div>
<div class="t" style="left:125.5px;top:1080px;font-size:13.3px;line-height:20px;transform:scaleX(1.0653);transform-origin:0 0"><b>Left-Click:</b> Rotate. <b>Middle-Click:</b> Move X/Y. <b>Right-Click/Mouse Wheel:</b>: Zoom. <b>Shift</b>: More options.</div>
<div class="t" style="left:1924.5px;top:1077.00px;font-size:13.3px;line-height:20px;color:#1e1e1e;font-weight:normal;">31 fps</div>
<div class="t" style="left:75px;top:54px;font-size:13px;line-height:20px;color:#1e1e1e"><u style="text-decoration-thickness:1px;text-underline-offset:2px">F</u>ile</div>
<div class="t" style="left:111px;top:54px;font-size:13px;line-height:20px;color:#1e1e1e"><u style="text-decoration-thickness:1px;text-underline-offset:2px">P</u>anels</div>
<div class="t" style="left:166px;top:54px;font-size:13px;line-height:20px;color:#1e1e1e"><u style="text-decoration-thickness:1px;text-underline-offset:2px">H</u>elp</div>
<svg style="left:69px;top:80px" width="6" height="26"><rect x="1" y="0" width="1" height="1" fill="#c8c6c2"/><rect x="4" y="0" width="1" height="1" fill="#c8c6c2"/><rect x="1" y="3" width="1" height="1" fill="#c8c6c2"/><rect x="4" y="3" width="1" height="1" fill="#c8c6c2"/><rect x="1" y="6" width="1" height="1" fill="#c8c6c2"/><rect x="4" y="6" width="1" height="1" fill="#c8c6c2"/><rect x="1" y="9" width="1" height="1" fill="#c8c6c2"/><rect x="4" y="9" width="1" height="1" fill="#c8c6c2"/><rect x="1" y="12" width="1" height="1" fill="#c8c6c2"/><rect x="4" y="12" width="1" height="1" fill="#c8c6c2"/><rect x="1" y="15" width="1" height="1" fill="#c8c6c2"/><rect x="4" y="15" width="1" height="1" fill="#c8c6c2"/><rect x="1" y="18" width="1" height="1" fill="#c8c6c2"/><rect x="4" y="18" width="1" height="1" fill="#c8c6c2"/><rect x="1" y="21" width="1" height="1" fill="#c8c6c2"/><rect x="4" y="21" width="1" height="1" fill="#c8c6c2"/><rect x="1" y="24" width="1" height="1" fill="#c8c6c2"/><rect x="4" y="24" width="1" height="1" fill="#c8c6c2"/></svg>
<div class="a" style="left:78.5px;top:78.5px;width:87px;height:31px;background:#dedcd9;border:1px solid #bdbab5;border-radius:3px"></div>
<svg style="left:83px;top:84.5px" width="17" height="17" viewBox="0 0 17 17"><path d="M6.3 6.5 V1.6 A1.4 1.4 0 0 0 3.5 1.6 V10.8 L2.6 10 A1.3 1.3 0 0 0 0.8 11.6 L3.6 15.6 H14.3 L15.9 13.2 V7.6 A1.2 1.2 0 0 0 13.5 7.6 V8.6 V7.1 A1.2 1.2 0 0 0 11.1 7.1 V8.4 V6.8 A1.2 1.2 0 0 0 8.7 6.8 V8.4 V6.6 A1.2 1.2 0 0 0 6.3 6.6 V8.6" fill="#fff" stroke="#111" stroke-width="1.25" stroke-linejoin="round"/></svg>
<div class="t" style="left:104px;top:83.40px;font-size:12.2px;line-height:20px;color:#1e1e1e;font-weight:normal;">Interact</div>
<svg style="left:172px;top:85px" width="17" height="17" viewBox="0 0 17 17"><g fill="none" stroke="#666" stroke-width="1"><path d="M8.5 0.5 L11 3 H6 Z M8.5 16.5 L11 14 H6Z M0.5 8.5 L3 6 V11Z M16.5 8.5 L14 6 V11Z"/><rect x="4" y="5" width="9" height="7"/><path d="M8.5 3 V14 M3 8.5 H14"/></g></svg>
<div class="t" style="left:193px;top:83.40px;font-size:12.2px;line-height:20px;color:#1e1e1e;font-weight:normal;">Move Camera</div>
<svg style="left:295px;top:86px" width="16" height="15" viewBox="0 0 16 15"><rect x="0.5" y="0.5" width="14" height="13" fill="#f7efa8" stroke="#222" stroke-width="1" stroke-dasharray="1.5 1.5"/><path d="M11 13.5 L14.5 13.5 L14.5 10Z" fill="#222"/></svg>
<div class="t" style="left:316px;top:83.40px;font-size:12.2px;line-height:20px;color:#1e1e1e;font-weight:normal;">Select</div>
<svg style="left:375px;top:85px" width="17" height="17" viewBox="0 0 17 17"><g fill="none" stroke="#777" stroke-width="1"><circle cx="8.5" cy="8.5" r="5"/><circle cx="8.5" cy="8.5" r="2.5"/><path d="M8.5 0.5 V16.5 M0.5 8.5 H16.5"/></g></svg>
<div class="t" style="left:397px;top:83.40px;font-size:12.2px;line-height:20px;color:#1e1e1e;font-weight:normal;">Focus Camera</div>
<svg style="left:500px;top:89px" width="16" height="8" viewBox="0 0 16 8"><rect x="0.5" y="0.5" width="15" height="6" fill="#e8e0a0" stroke="#555" stroke-width="1"/><path d="M3 1 V3.5 M5.5 1 V3.5 M8 1 V4 M10.5 1 V3.5 M13 1 V3.5" stroke="#555" stroke-width="0.8"/></svg>
<div class="t" style="left:520.5px;top:83.40px;font-size:12.2px;line-height:20px;color:#1e1e1e;font-weight:normal;">Measure</div>
<svg style="left:592px;top:86px" width="16" height="14" viewBox="0 0 16 14"><path d="M1 13 L14 1.5" stroke="#17a02a" stroke-width="2.4" stroke-linecap="round"/><path d="M9.5 2 L15 0.5 L13.5 6Z" fill="#0c7a1a"/></svg>
<div class="t" style="left:613px;top:83.40px;font-size:12.2px;line-height:20px;color:#1e1e1e;font-weight:normal;">2D Pose Estimate</div>
<svg style="left:736px;top:86px" width="16" height="14" viewBox="0 0 16 14"><path d="M1 13 L14 1.5" stroke="#17a02a" stroke-width="2.4" stroke-linecap="round"/><path d="M9.5 2 L15 0.5 L13.5 6Z" fill="#0c7a1a"/></svg>
<div class="t" style="left:756.5px;top:83.40px;font-size:12.2px;line-height:20px;color:#1e1e1e;font-weight:normal;">2D Nav Goal</div>
<svg style="left:852.5px;top:85px" width="12" height="16" viewBox="0 0 12 16"><path d="M6 15.5 C4 11 1 8.5 1 5.5 A5 5 0 0 1 11 5.5 C11 8.5 8 11 6 15.5Z" fill="#c8651e" stroke="#8a3f10" stroke-width="0.8"/><circle cx="6" cy="5.5" r="1.8" fill="#fff3e0"/></svg>
<div class="t" style="left:871.5px;top:83.40px;font-size:12.2px;line-height:20px;color:#1e1e1e;font-weight:normal;">Publish Point</div>
<div class="a" style="left:966px;top:84px;width:1px;height:19px;background:#cfccc7"></div>
<svg style="left:979.5px;top:87.5px" width="14" height="12" viewBox="0 0 14 12"><path d="M7 1 V11 M1 6 H13" stroke="#2a63c0" stroke-width="2.6"/><path d="M7 1 V11 M1 6 H13" stroke="#6fa0ea" stroke-width="1"/></svg>
<svg style="left:1013.5px;top:91.5px" width="14" height="5"><rect x="0.5" y="0.5" width="13" height="4" rx="1" fill="#6f9fe8" stroke="#2a5fb8"/></svg>
<svg style="left:1029px;top:101.5px" width="6" height="3"><path d="M0 0h5.5l-2.75 2.8z" fill="#222"/></svg>
<svg style="left:1047px;top:87.5px" width="16" height="10" viewBox="0 0 16 10"><path d="M0.5 5 C3 1 13 1 15.5 5 C13 9 3 9 0.5 5Z" fill="#dfe6ef" stroke="#7a8696"/><circle cx="8" cy="5" r="2.8" fill="#2b3f66"/><circle cx="7" cy="4" r="0.9" fill="#fff"/></svg>
<svg style="left:1062.5px;top:101.5px" width="6" height="3"><path d="M0 0h5.5l-2.75 2.8z" fill="#222"/></svg>
<div class="t" style="left:963px;top:30px;width:100px;text-align:center;font-size:14.5px;line-height:20px;font-weight:bold;color:#dfdbd2">RViz*</div>
<svg style="left:1899px;top:31px" width="60" height="18" viewBox="0 0 60 18">
<circle cx="9.5" cy="8.8" r="8" fill="#7d7c78" stroke="#5a5955" stroke-width="0.8"/><path d="M5.5 9 H13.5" stroke="#3a3936" stroke-width="1.4"/>
<circle cx="30" cy="8.8" r="8" fill="#7d7c78" stroke="#5a5955" stroke-width="0.8"/><rect x="26" y="6" width="8" height="5.5" fill="none" stroke="#3a3936" stroke-width="1.2"/>
<circle cx="50.8" cy="8.8" r="8" fill="#f06b2a" stroke="#b84a18" stroke-width="0.8"/><path d="M48 6 L53.6 11.6 M53.6 6 L48 11.6" stroke="#3a2010" stroke-width="1.3"/>
</svg>
<div class="t" style="left:156px;top:2.5px;font-size:15.5px;line-height:20px;color:#e6e2d8;font-weight:bold;transform:scaleX(0.95);transform-origin:0 0">rviz</div>
<svg style="left:186px;top:9px" width="10" height="6"><path d="M0 0h10l-5 5.5z" fill="#e0ddd5"/></svg>
<div class="t" style="left:133px;top:6px;font-size:9px;line-height:12px;font-weight:bold;color:#e6e2d8;letter-spacing:-0.5px">RV<span style="font-size:7px">iz</span></div>
<div class="t" style="left:1016px;top:3px;font-size:14.5px;line-height:20px;color:#e6e2d8;font-weight:bold">11</div><div class="t" style="left:1037px;top:3px;font-size:14.5px;line-height:20px;color:#e6e2d8;font-weight:bold">:</div><div class="t" style="left:1047px;top:3px;font-size:14.5px;line-height:20px;color:#e6e2d8;font-weight:bold">33</div>
<svg style="left:1067px;top:7px" width="8" height="8"><circle cx="4" cy="4" r="3.7" fill="#e6e2d8"/></svg>
<div class="t" style="left:1793px;top:3px;font-size:15px;line-height:20px;color:#e6e2d8;font-weight:bold">A</div>
<svg style="left:1810px;top:9px" width="11" height="6"><path d="M0 0h10.5l-5.25 5.5z" fill="#e0ddd5"/></svg>
<svg style="left:1853px;top:5px" width="17" height="15" viewBox="0 0 17 15"><g fill="none" stroke="#e6e2d8" stroke-width="1.6"><path d="M1.5 5.5 A10 10 0 0 1 15.5 5.5"/><path d="M4 8.2 A6.5 6.5 0 0 1 13 8.2"/></g><circle cx="8.5" cy="12" r="2" fill="#e6e2d8"/></svg>
<svg style="left:1881px;top:4px" width="19" height="16" viewBox="0 0 19 16"><path d="M0.5 5 H3.5 L8 1 V14 L3.5 10 H0.5Z" fill="#e6e2d8"/><g fill="none" stroke="#8a8780" stroke-width="1.2"><path d="M10 4 Q12 7.5 10 11"/><path d="M12.5 2.5 Q15.5 7.5 12.5 12.5"/></g><path d="M13 12 L17 16 M17 12 L13 16" stroke="#e6e2d8" stroke-width="1.6"/></svg>
<svg style="left:1913px;top:3px" width="13" height="18" viewBox="0 0 13 18"><rect x="4" y="0.5" width="5" height="2" fill="#e6e2d8"/><rect x="1" y="2.5" width="11" height="15" fill="none" stroke="#e6e2d8" stroke-width="1.6"/><path d="M3.5 6 H9.5 M3.5 9 H9.5 M3.5 12 H9.5 M3.5 15 H9.5" stroke="#e6e2d8" stroke-width="1.4"/></svg>
<svg style="left:1937px;top:9px" width="11" height="6"><path d="M0 0h10.5l-5.25 5.5z" fill="#e0ddd5"/></svg>
<svg style="left:0;top:0" width="120" height="25"><g fill="none" stroke="#e8e4da" stroke-width="1.9" stroke-linecap="round" stroke-linejoin="round"><path d="M9.8 7.9 H23.9 Q22.5 11.5 19.8 13.2 M17.8 11.4 Q17.6 16.8 11 19.6"/><path d="M28.8 6.1 Q27.5 9.8 25.1 12.2 M28.6 8.7 H36.1 Q34.5 16 26.3 19.4"/><path d="M42.3 7.3 H50.8 M39.8 11 H53.3 M46.5 11 Q46.3 16.5 42.3 19.3"/><path d="M63.7 9.4 Q59 13.5 53.9 15.3 M60.6 12.4 V19.8"/><path d="M71.6 6.8 V17.6 Q71.6 18.2 72.5 18.2 H80.6 M71.6 11.8 L78 10 M78.6 5.8 L79.6 8 M81.2 5.4 L82.2 7.6"/><path d="M86.4 7.3 H94.9 M83.9 11 H97.4 M90.6 11 Q90.4 16.5 86.4 19.3"/><path d="M107.80000000000001 9.4 Q103.1 13.5 98.0 15.3 M104.7 12.4 V19.8"/></g></svg>
<svg style="left:0;top:0" width="1100" height="25"><g fill="none" stroke="#e8e4da" stroke-width="1.6"><path d="M967.8 7 H976.4 V19 H967.8 Z M967.8 13 H976.4"/><path d="M998.6 7 H1007.2 V19 H998.6 Z M998.6 13 H1007.2"/><path d="M981.8 8.5 H985.3 V17 H981.8Z M981.8 12.6 H985.3" stroke-width="1.3"/><path d="M986.8 7 H990 V9.3 H987 M991.2 7 H994.3 V9.3 H991.5 M987.5 11 L987 19.5 M987.2 11.2 H994.5 M990.5 10.2 V19.5 M987.5 13.8 H994 M987.5 16.3 H994 M987.3 19 H995" stroke-width="1.2"/></g></svg>
<div class="a" style="left:0px;top:420px;width:61px;height:63px;background:#5e4b51;border-radius:0 5px 5px 0"></div>
<svg style="left:0;top:0" width="8" height="500"><circle cx="1.2" cy="58" r="2.3" fill="#f07020"/><circle cx="1.2" cy="307.5" r="2.3" fill="#f07020"/><circle cx="1.2" cy="317" r="2.3" fill="#f07020"/><circle cx="1.2" cy="326.5" r="2.3" fill="#f07020"/><circle cx="1.2" cy="334" r="2.3" fill="#f07020"/><circle cx="1.2" cy="384.3" r="2.3" fill="#f07020"/><circle cx="1.2" cy="449.5" r="2.3" fill="#f07020"/></svg>
<svg style="left:5px;top:31px" width="50" height="52" viewBox="0 0 50 52">
<defs><radialGradient id="ff1" cx="0.7" cy="0.15" r="1"><stop offset="0" stop-color="#fff44f"/><stop offset="0.35" stop-color="#ff9a1e"/><stop offset="0.7" stop-color="#ff3f5a"/><stop offset="1" stop-color="#e31587"/></radialGradient>
<radialGradient id="ff2" cx="0.4" cy="0.35" r="0.7"><stop offset="0" stop-color="#7a4ef0"/><stop offset="1" stop-color="#5b2bd0"/></radialGradient></defs>
<path d="M36 3 C41 9 47 17 47 28 A22 22 0 0 1 3 28 C3 20 7 14 10 11 C10 15 11 17 13 18 C14 12 18 8 22 7 C20 11 21 13 23 14 C28 12 34 10 36 3Z" fill="url(#ff1)"/>
<circle cx="26" cy="29" r="10.5" fill="url(#ff2)"/>
<path d="M8 26 C12 36 22 42 32 39 C26 44 14 44 8 34Z" fill="#ff6a2e" opacity="0.9"/>
<path d="M14 16 C18 14 24 16 26 19 C20 19 17 21 16 24 C14 22 13 19 14 16Z" fill="#ff8a30"/>
</svg>
<svg style="left:8px;top:100px" width="44" height="47" viewBox="0 0 44 47">
<defs><linearGradient id="fl" x1="0" y1="0" x2="0" y2="1"><stop offset="0" stop-color="#e0e0dc"/><stop offset="1" stop-color="#9a9a98"/></linearGradient></defs>
<rect x="0.5" y="0.5" width="43" height="46" rx="3" fill="url(#fl)" stroke="#6e6e6c"/>
<rect x="4" y="5" width="36" height="12" fill="#2e2e2c"/><rect x="5" y="8" width="34" height="9" fill="#e8b070"/><rect x="5" y="12" width="34" height="5" fill="#f6d8a8"/>
<rect x="0.5" y="17" width="43" height="29.5" rx="2" fill="#bdbdbb" stroke="#7a7a78"/>
<rect x="15" y="27" width="14" height="7" rx="1" fill="#f4f4f2" stroke="#555" stroke-width="1.2"/></svg>
<svg style="left:8px;top:166px" width="44" height="47" viewBox="0 0 44 47">
<path d="M14 10 V6 A4 4 0 0 1 18 2 H26 A4 4 0 0 1 30 6 V10" fill="none" stroke="#e8742e" stroke-width="2.6"/>
<rect x="0.5" y="9" width="43" height="37" fill="#f07a30"/><rect x="0.5" y="9" width="43" height="4" fill="#f49a50"/>
<path d="M22 17 L15 38 M22 17 L29 38 M12 30 H32 M13 34 H31" stroke="#fff" stroke-width="3"/></svg>
<svg style="left:8px;top:234px" width="45" height="46" viewBox="0 0 45 46">
<defs><linearGradient id="hp" x1="0" y1="0" x2="0" y2="1"><stop offset="0" stop-color="#5a9ae0"/><stop offset="1" stop-color="#2a60a8"/></linearGradient></defs>
<circle cx="22.5" cy="23" r="21.5" fill="url(#hp)" stroke="#234f8a"/>
<path d="M15.5 16.5 A7 7 0 1 1 24.5 23 Q22.5 24.5 22.5 28" fill="none" stroke="#fff" stroke-width="4.2"/><circle cx="22.5" cy="35.5" r="2.6" fill="#fff"/></svg>
<svg style="left:6px;top:303px" width="48" height="39" viewBox="0 0 48 39">
<rect x="0.5" y="0.5" width="47" height="38" rx="1.5" fill="#cfcfcc" stroke="#8a8a88"/>
<defs><linearGradient id="tm" x1="0" y1="0" x2="1" y2="1"><stop offset="0" stop-color="#1a1a1a"/><stop offset="1" stop-color="#3c3c3c"/></linearGradient></defs>
<rect x="3.5" y="3.5" width="41" height="31" fill="url(#tm)"/>
<path d="M8 9 L14 13 L8 17" fill="none" stroke="#fff" stroke-width="2.2"/><path d="M15 19 H23" stroke="#fff" stroke-width="2"/></svg>
<svg style="left:4.5px;top:360.5px" width="50" height="50" viewBox="0 0 50 50">
<rect x="0" y="0" width="50" height="50" fill="#fff"/>
<path d="M10 0 H40 L48 12 L43 21 L38 14 L31 24 L25 17 L18 24 L12 14 L6 21 L2 12Z" fill="#0a5bb0"/>
<path d="M2 20 L8 28 L12 20 L18 30 L25 22 L31 30 L38 20 L42 28 L48 20 V30 L40 43 H10 L2 30Z" fill="#000"/>
<text x="25" y="49" font-size="7.5" text-anchor="middle" font-family="Liberation Sans" fill="#000">AutoWare</text></svg>
<svg style="left:0;top:430px" width="60" height="40" viewBox="0 430 60 40"><g fill="none" stroke-linecap="round" stroke-linejoin="round">
<g stroke="#3a2e32" stroke-width="4.2" transform="translate(1,1.2)"><path d="M11 440.5 L11.5 462.5 M11 440.5 Q23 438 22 446 Q21 450.5 12.5 450.5 M15 450.5 L22 463"/><path d="M24 440 L31 458 L38.5 439"/><path d="M40 447 L40.6 457"/><path d="M43 447 L50.5 445.5 L43.5 456.5 L51 455"/></g>
<g stroke="#f4f4f4" stroke-width="3.6"><path d="M11 440.5 L11.5 462.5 M11 440.5 Q23 438 22 446 Q21 450.5 12.5 450.5 M15 450.5 L22 463"/><path d="M24 440 L31 458 L38.5 439"/><path d="M40 447 L40.6 457"/><path d="M43 447 L50.5 445.5 L43.5 456.5 L51 455"/></g>
<circle cx="39.8" cy="442.5" r="1.8" fill="#f4f4f4"/></g></svg>
<svg style="left:14px;top:1055px" width="33" height="33"><circle cx="3.5" cy="3.5" r="3.1" fill="#f2f2f2"/><circle cx="3.5" cy="16.5" r="3.1" fill="#f2f2f2"/><circle cx="3.5" cy="29.5" r="3.1" fill="#f2f2f2"/><circle cx="16.5" cy="3.5" r="3.1" fill="#f2f2f2"/><circle cx="16.5" cy="16.5" r="3.1" fill="#f2f2f2"/><circle cx="16.5" cy="29.5" r="3.1" fill="#f2f2f2"/><circle cx="29.5" cy="3.5" r="3.1" fill="#f2f2f2"/><circle cx="29.5" cy="16.5" r="3.1" fill="#f2f2f2"/><circle cx="29.5" cy="29.5" r="3.1" fill="#f2f2f2"/></svg>
</body></html>
